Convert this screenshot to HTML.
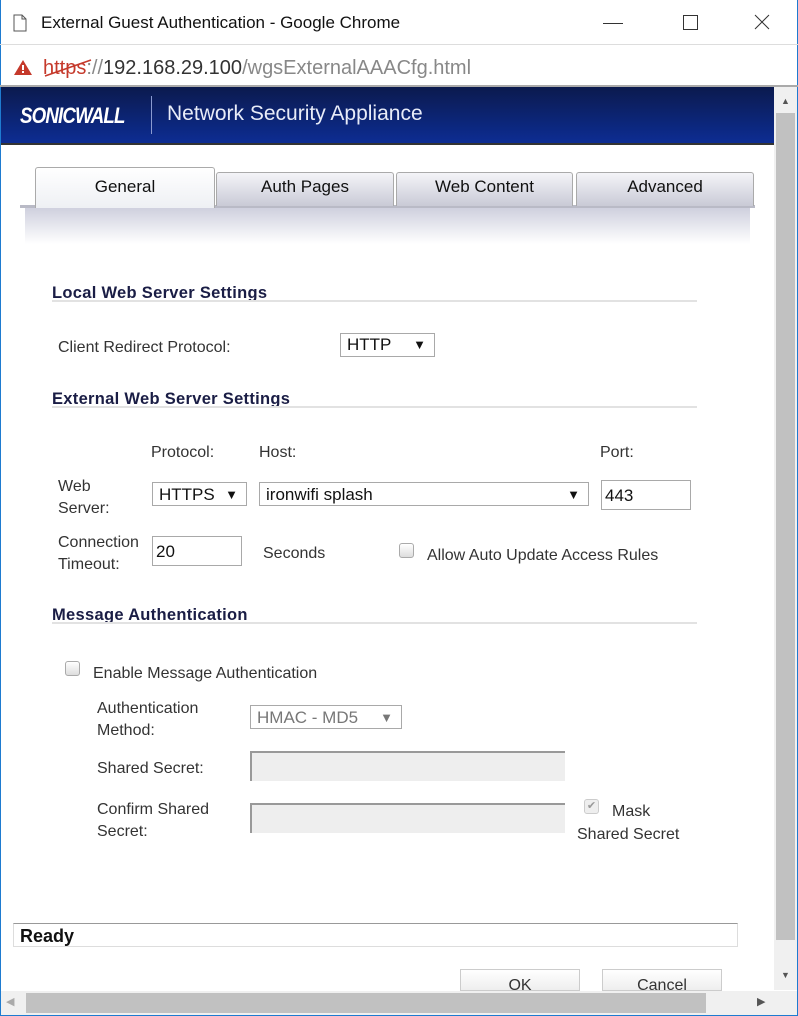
<!DOCTYPE html>
<html><head><meta charset="utf-8"><style>
*{margin:0;padding:0;box-sizing:border-box}
body{width:798px;height:1016px;position:relative;overflow:hidden;background:#fff;font-family:"Liberation Sans",sans-serif;color:#333}
.a{position:absolute;white-space:nowrap}
.lbl{font-size:16px;color:#333;line-height:22px;margin-top:2px}
.h{font-size:16.5px;font-weight:bold;color:#1a1d45;margin-top:2px;letter-spacing:.3px}
.hr{position:absolute;left:52px;width:645px;height:2px;background:#e2e2e2}
.sel{position:absolute;border:1px solid #a9a9a9;background:#fff;font-size:17px;color:#111;padding-left:6px;line-height:28px}
.sel i{position:absolute;right:8px;top:0;font-style:normal;font-size:13px}
.inp{position:absolute;border:1px solid #a9a9a9;background:#fff;font-size:17px;color:#111;padding-left:3px;line-height:29px}
.dis{position:absolute;background:#eee;border-top:2px solid #999;border-left:2px solid #999}
.cb{position:absolute;width:15px;height:15px;border:1px solid #aaa;border-radius:3px;background:linear-gradient(#fff,#ddd)}
.tab{position:absolute;top:172px;height:34px;border:1px solid #aaa;border-bottom:none;border-radius:3px 3px 0 0;background:linear-gradient(#f4f4f8,#c9cad6);font-size:17px;color:#111;text-align:center;line-height:28px}
</style></head><body>
<div class="a" style="left:0;top:0;width:798px;height:1016px;border:1px solid #1e7bd0;border-top:none"></div>
<svg class="a" style="left:13px;top:14px" width="14" height="18"><path d="M1 1h8l4 4v12H1z M9 1v4h4" fill="#fff" stroke="#555"/></svg>
<div class="a" style="left:41px;top:13px;font-size:17px;color:#111">External Guest Authentication - Google Chrome</div>
<div class="a" style="left:603px;top:23px;width:20px;height:1px;background:#333"></div>
<div class="a" style="left:683px;top:15px;width:15px;height:15px;border:1px solid #333"></div>
<svg class="a" style="left:754px;top:14px" width="16" height="16"><path d="M1 1L15 15M15 1L1 15" stroke="#333"/></svg>
<div class="a" style="left:0;top:44px;width:798px;height:1px;background:#ddd"></div>
<svg class="a" style="left:13px;top:59px" width="20" height="17"><path d="M10 1L19 16H1z" fill="#c5392b"/><rect x="9" y="6" width="2" height="5" fill="#fff"/><rect x="9" y="12" width="2" height="2" fill="#fff"/></svg>
<div class="a" style="left:43px;top:57px;font-size:20px;color:#333"><span style="color:#c5392b;position:relative">https<svg style="position:absolute;left:0;top:2px" width="50" height="20"><path d="M2 17L48 1" stroke="#c5392b" stroke-width="1.5"/></svg></span><span style="color:#888">://</span>192.168.29.100<span style="color:#888">/wgsExternalAAACfg.html</span></div>
<div class="a" style="left:0;top:85px;width:798px;height:2px;background:#aaa"></div>
<div class="a" style="left:1px;top:87px;width:773px;height:57px;background:linear-gradient(#0b1a4e,#0d2d94)"></div>
<div class="a" style="left:1px;top:143px;width:773px;height:2px;background:#333"></div>
<div class="a" style="left:20px;top:103px;font-size:22px;font-weight:bold;font-style:italic;color:#fff;letter-spacing:-1px;transform:scaleX(.85);transform-origin:left">SONICWALL</div>
<div class="a" style="left:151px;top:96px;width:1px;height:38px;background:#8a9ad0"></div>
<div class="a" style="left:167px;top:102px;font-size:21px;color:#e8ecf8">Network Security Appliance</div>
<div class="a" style="left:774px;top:87px;width:23px;height:903px;background:#f0f0f0"></div>
<div class="a" style="left:776px;top:113px;width:19px;height:827px;background:#c1c1c1"></div>
<div class="a" style="left:781px;top:96px;font-size:9px;color:#555">▲</div>
<div class="a" style="left:781px;top:970px;font-size:9px;color:#555">▼</div>
<div class="a" style="left:1px;top:991px;width:796px;height:24px;background:#f0f0f0"></div>
<div class="a" style="left:26px;top:993px;width:680px;height:20px;background:#c1c1c1"></div>
<div class="a" style="left:6px;top:995px;font-size:11px;color:#aaa">◀</div>
<div class="a" style="left:757px;top:995px;font-size:11px;color:#555">▶</div>
<div class="a" style="left:20px;top:205px;width:735px;height:3px;background:#b9bac6"></div>
<div class="a" style="left:25px;top:208px;width:725px;height:36px;background:linear-gradient(#cfd0de,#fff)"></div>
<div class="tab" style="left:35px;top:167px;width:180px;height:41px;background:linear-gradient(#fff,#eef0f4);line-height:37px">General</div>
<div class="tab" style="left:216px;width:178px">Auth Pages</div>
<div class="tab" style="left:396px;width:177px">Web Content</div>
<div class="tab" style="left:576px;width:178px">Advanced</div>
<div class="a h" style="left:52px;top:282px">Local Web Server Settings</div>
<div class="hr" style="top:300px"></div>
<div class="a lbl" style="left:58px;top:335px">Client Redirect Protocol:</div>
<div class="sel" style="left:340px;top:333px;width:95px;height:24px;line-height:22px">HTTP<i>▼</i></div>
<div class="a h" style="left:52px;top:388px">External Web Server Settings</div>
<div class="hr" style="top:406px"></div>
<div class="a lbl" style="left:151px;top:440px">Protocol:</div>
<div class="a lbl" style="left:259px;top:440px">Host:</div>
<div class="a lbl" style="left:600px;top:440px">Port:</div>
<div class="a lbl" style="left:58px;top:474px;white-space:normal;width:60px">Web Server:</div>
<div class="sel" style="left:152px;top:482px;width:95px;height:24px;line-height:23px">HTTPS<i>▼</i></div>
<div class="sel" style="left:259px;top:482px;width:330px;height:24px;line-height:23px">ironwifi splash<i>▼</i></div>
<div class="inp" style="left:601px;top:480px;width:90px;height:30px">443</div>
<div class="a lbl" style="left:58px;top:530px;white-space:normal;width:90px">Connection Timeout:</div>
<div class="inp" style="left:152px;top:536px;width:90px;height:30px">20</div>
<div class="a lbl" style="left:263px;top:541px">Seconds</div>
<div class="cb" style="left:399px;top:543px"></div>
<div class="a lbl" style="left:427px;top:543px">Allow Auto Update Access Rules</div>
<div class="a h" style="left:52px;top:604px">Message Authentication</div>
<div class="hr" style="top:622px"></div>
<div class="cb" style="left:65px;top:661px"></div>
<div class="a lbl" style="left:93px;top:661px">Enable Message Authentication</div>
<div class="a lbl" style="left:97px;top:696px;white-space:normal;width:120px">Authentication Method:</div>
<div class="sel" style="left:250px;top:705px;width:152px;height:24px;line-height:23px;color:#777">HMAC - MD5<i>▼</i></div>
<div class="a lbl" style="left:97px;top:756px">Shared Secret:</div>
<div class="dis" style="left:250px;top:751px;width:315px;height:30px"></div>
<div class="a lbl" style="left:97px;top:797px;white-space:normal;width:130px">Confirm Shared Secret:</div>
<div class="dis" style="left:250px;top:803px;width:315px;height:30px"></div>
<div class="cb" style="left:584px;top:799px;background:#eee;border-color:#ccc;font-size:11px;color:#999;line-height:13px;text-align:center">✔</div>
<div class="a lbl" style="left:612px;top:799px">Mask</div>
<div class="a lbl" style="left:577px;top:822px">Shared Secret</div>
<div class="a" style="left:13px;top:923px;width:725px;height:24px;border:1px solid #ddd;border-top:1px solid #999"></div>
<div class="a" style="left:20px;top:926px;font-size:18px;font-weight:bold;color:#111">Ready</div>
<div class="a" style="left:460px;top:969px;width:120px;height:22px;border:1px solid #ccc;background:linear-gradient(#fff,#eee);overflow:hidden;text-align:center;font-size:16px;line-height:31px;color:#333">OK</div>
<div class="a" style="left:602px;top:969px;width:120px;height:22px;border:1px solid #ccc;background:linear-gradient(#fff,#eee);overflow:hidden;text-align:center;font-size:16px;line-height:31px;color:#333">Cancel</div>
</body></html>
